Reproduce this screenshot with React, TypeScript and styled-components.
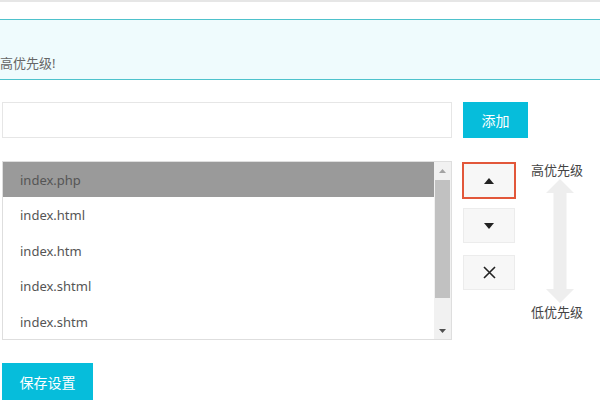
import styled, {createGlobalStyle} from "styled-components";

const GlobalStyle = createGlobalStyle`
  html, body {
    margin: 0;
    padding: 0;
    background: #fff;
  }
  body {
    font-family: "Noto Sans", "Noto Sans CJK SC", sans-serif;
    font-size: 13px;
    color: #555;
    overflow: hidden;
  }
`;

const Page = styled.div`
  width: 600px;
  height: 400px;
  overflow: hidden;
`;

const TopLine = styled.div`
  height: 2px;
  background: #e6e6e6;
  margin-bottom: 17px;
`;

const Notice = styled.div`
  border-top: 1px solid #4ec2cc;
  border-bottom: 1px solid #4ec2cc;
  background: #effbfd;
  height: 61px;
  box-sizing: border-box;
  padding-top: 33px;
  line-height: 20px;
  color: #666;
  font-size: 13px;
`;

const Body = styled.div`
  padding-left: 2px;
`;

const AddRow = styled.div`
  display: flex;
  margin-top: 22px;
`;

const Input = styled.input`
  width: 450px;
  height: 36px;
  box-sizing: border-box;
  border: 1px solid #e6e6e6;
  outline: none;
  padding: 0 10px;
  font: inherit;
`;

const CyanButton = styled.button<{$w: number}>`
  width: ${p => p.$w}px;
  height: 36px;
  border: none;
  background: #06bddb;
  color: #fff;
  font-family: "Noto Sans CJK SC", sans-serif;
  font-size: 14px;
  padding: 0;
  cursor: pointer;
`;

const AddButton = styled(CyanButton)`
  margin-left: 11px;
`;

const ListRow = styled.div`
  display: flex;
  margin-top: 23px;
`;

const ListBox = styled.div`
  width: 450px;
  height: 179px;
  box-sizing: border-box;
  border: 1px solid #dedede;
  display: flex;
`;

const Items = styled.ul`
  flex: 1;
  margin: 0;
  padding: 0;
  list-style: none;
`;

const Item = styled.li<{$active?: boolean}>`
  height: 35.4px;
  line-height: 36px;
  padding-left: 17px;
  background: ${p => (p.$active ? "#9a9a9a" : "#fff")};
  color: #555;
  font-size: 13px;
`;

const ScrollBar = styled.div`
  width: 17px;
  background: #f1f1f1;
  display: flex;
  flex-direction: column;
  align-items: center;
`;

const ScrollArrow = styled.div<{$color: string}>`
  height: 17px;
  width: 17px;
  display: flex;
  align-items: center;
  justify-content: center;
  color: ${p => p.$color};
`;

const Thumb = styled.div`
  width: 15px;
  height: 118px;
  margin-top: 1px;
  background: #c1c1c1;
`;

const ScrollSpace = styled.div`
  flex: 1;
`;

const Controls = styled.div`
  display: flex;
  flex-direction: column;
  margin-left: 11px;
  margin-top: 2px;
`;

const MoveButton = styled.button<{$focused?: boolean}>`
  width: 52px;
  height: 35px;
  box-sizing: border-box;
  border: 1px solid #ececec;
  background: #f7f7f7;
  display: flex;
  align-items: center;
  justify-content: center;
  padding: 0;
  margin-bottom: ${p => (p.$focused ? 10 : 12)}px;
  outline: ${p => (p.$focused ? "2px solid #e2573a" : "none")};
  outline-offset: -1px;
  color: #222;
`;

const Legend = styled.div`
  display: flex;
  flex-direction: column;
  align-items: flex-start;
  margin-left: 16px;
  font-family: "Noto Sans CJK SC", sans-serif;
  font-size: 13px;
  color: #444;
`;

const LegendText = styled.div`
  line-height: 18px;
`;

const LegendArrow = styled.svg`
  margin-left: 14px;
`;

const SaveButton = styled(CyanButton)`
  margin-top: 23px;
  height: 38px;
`;

const files = ["index.php", "index.html", "index.htm", "index.shtml", "index.shtm"];

function App() {
    return (
        <Page>
            <GlobalStyle/>
            <TopLine/>
            <Notice>高优先级!</Notice>
            <Body>
                <AddRow>
                    <Input type="text"/>
                    <AddButton $w={65}>添加</AddButton>
                </AddRow>
                <ListRow>
                    <ListBox>
                        <Items>
                            {files.map((f, i) => (
                                <Item key={f} $active={i === 0}>{f}</Item>
                            ))}
                        </Items>
                        <ScrollBar>
                            <ScrollArrow $color="#a3a3a3">
                                <svg width="7" height="4" viewBox="0 0 7 4"><path d="M3.5 0L7 4H0z" fill="currentColor"/></svg>
                            </ScrollArrow>
                            <Thumb/>
                            <ScrollSpace/>
                            <ScrollArrow $color="#505050">
                                <svg width="7" height="4" viewBox="0 0 7 4"><path d="M0 0H7L3.5 4z" fill="currentColor"/></svg>
                            </ScrollArrow>
                        </ScrollBar>
                    </ListBox>
                    <Controls>
                        <MoveButton $focused>
                            <svg width="10" height="6" viewBox="0 0 10 6"><path d="M5 0L10 6H0z" fill="currentColor"/></svg>
                        </MoveButton>
                        <MoveButton>
                            <svg width="10" height="6" viewBox="0 0 10 6"><path d="M0 0H10L5 6z" fill="currentColor"/></svg>
                        </MoveButton>
                        <MoveButton>
                            <svg width="13" height="13" viewBox="0 0 13 13">
                                <path d="M1 1L12 12M12 1L1 12" stroke="currentColor" strokeWidth="1.6"/>
                            </svg>
                        </MoveButton>
                    </Controls>
                    <Legend>
                        <LegendText>高优先级</LegendText>
                        <LegendArrow width="30" height="124" viewBox="0 0 30 124">
                            <path d="M15 0L29 14H21.5V110H29L15 124L1 110H8.5V14H1z" fill="#eeeeee"/>
                        </LegendArrow>
                        <LegendText>低优先级</LegendText>
                    </Legend>
                </ListRow>
                <SaveButton $w={91}>保存设置</SaveButton>
            </Body>
        </Page>
    );
}

export default App;
